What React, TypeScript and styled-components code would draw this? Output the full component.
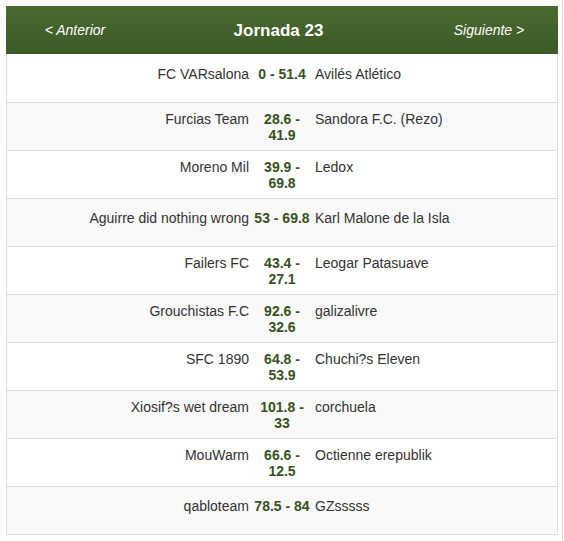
import styled, { createGlobalStyle } from "styled-components";

const GlobalStyle = createGlobalStyle`
  html, body {
    margin: 0;
    padding: 0;
    background: #fff;
  }
  body {
    font-family: "Liberation Sans", Arial, sans-serif;
    font-size: 14px;
    color: #333;
  }
`;

const Page = styled.div`
  width: 563px;
  min-height: 541px;
  box-sizing: border-box;
  padding: 6px 0 0 6px;
  border-right: 1px solid #ddd;
`;

const Panel = styled.div`
  width: 552px;
`;

const Header = styled.div`
  height: 48px;
  display: grid;
  grid-template-columns: 1fr 2fr 1fr;
  align-items: center;
  background: linear-gradient(to bottom, #4a6a31 0%, #3c5a26 100%);
  color: #fff;
`;

const NavLink = styled.a`
  text-align: center;
  font-style: italic;
  font-size: 14px;
  color: #fff;
  text-decoration: none;
  cursor: pointer;
`;

const Title = styled.h3`
  margin: 0;
  text-align: center;
  font-size: 17px;
  font-weight: bold;
  padding-right: 7px;
  padding-top: 1px;
`;

const Table = styled.div`
  border-left: 1px solid #ddd;
  border-right: 1px solid #ddd;
  border-bottom: 1px solid #ddd;
`;

// two-line scores sit a little higher in the row than single-line ones
const Row = styled.div<{ $striped: boolean; $twoLine: boolean }>`
  height: 48px;
  box-sizing: border-box;
  display: grid;
  grid-template-columns: 1fr 60px 1fr;
  column-gap: 3px;
  align-items: start;
  padding-top: ${(p) => (p.$twoLine ? "8px" : "11px")};
  line-height: 16px;
  background: ${(p) => (p.$striped ? "#f9f9f9" : "#fff")};

  &:first-child {
    padding-top: ${(p) => (p.$twoLine ? "9px" : "12px")};
  }

  & + & {
    border-top: 1px solid #ddd;
  }
`;

const Home = styled.div`
  text-align: right;
  white-space: nowrap;
`;

const Score = styled.div`
  text-align: center;
  font-weight: bold;
  color: #37521f;
`;

const Away = styled.div`
  text-align: left;
  white-space: nowrap;
`;

const matches = [
  { home: "FC VARsalona", score: "0 - 51.4", away: "Avilés Atlético" },
  { home: "Furcias Team", score: "28.6 - 41.9", away: "Sandora F.C. (Rezo)" },
  { home: "Moreno Mil", score: "39.9 - 69.8", away: "Ledox" },
  { home: "Aguirre did nothing wrong", score: "53 - 69.8", away: "Karl Malone de la Isla" },
  { home: "Failers FC", score: "43.4 - 27.1", away: "Leogar Patasuave" },
  { home: "Grouchistas F.C", score: "92.6 - 32.6", away: "galizalivre" },
  { home: "SFC 1890", score: "64.8 - 53.9", away: "Chuchi?s Eleven" },
  { home: "Xiosif?s wet dream", score: "101.8 - 33", away: "corchuela" },
  { home: "MouWarm", score: "66.6 - 12.5", away: "Octienne erepublik" },
  { home: "qabloteam", score: "78.5 - 84", away: "GZsssss" },
];

export default function App() {
  return (
    <>
      <GlobalStyle />
      <Page>
        <Panel>
          <Header>
            <NavLink>&lt; Anterior</NavLink>
            <Title>Jornada 23</Title>
            <NavLink>Siguiente &gt;</NavLink>
          </Header>
          <Table>
            {matches.map((m, i) => (
              <Row key={i} $striped={i % 2 === 1} $twoLine={m.score.length > 9}>
                <Home>{m.home}</Home>
                <Score>{m.score}</Score>
                <Away>{m.away}</Away>
              </Row>
            ))}
          </Table>
        </Panel>
      </Page>
    </>
  );
}
